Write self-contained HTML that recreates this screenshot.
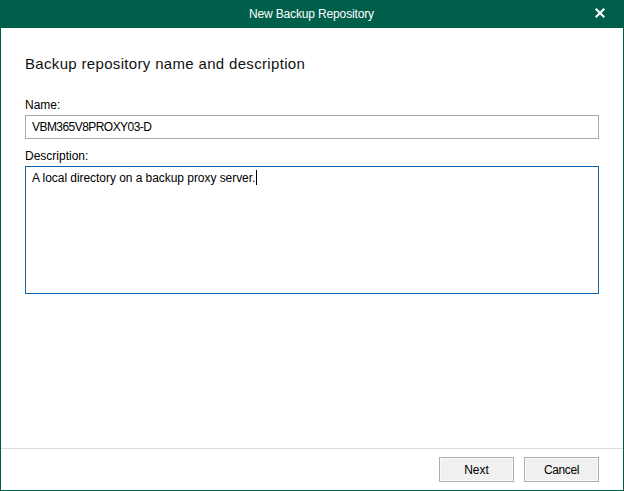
<!DOCTYPE html>
<html><head><meta charset="utf-8">
<style>
html,body{margin:0;padding:0;}
body{width:624px;height:491px;position:relative;overflow:hidden;background:#fff;font-family:"Liberation Sans",sans-serif;}
.abs{position:absolute;white-space:nowrap;}
#frame{position:absolute;left:0;top:0;width:622px;height:489px;border:1px solid #005F4B;background:#fff;}
#title{position:absolute;left:0;top:0;width:624px;height:28px;background:#005F4B;}
#ttext{left:249px;top:7px;font-size:12px;color:#fff;line-height:14px;letter-spacing:-0.15px;}
#close{left:594px;top:7px;width:12px;height:12px;}
#head{left:25px;top:55px;font-size:15px;color:#111;line-height:17px;letter-spacing:0.33px;}
.lbl{font-size:12px;color:#000;line-height:14px;}
#lname{left:25px;top:98px;}
#name{left:25px;top:115px;width:572px;height:22px;border:1px solid #A9A9A9;}
#nametext{left:32px;top:120px;letter-spacing:-0.55px;}
#ldesc{left:25px;top:149px;}
#desc{left:25px;top:166px;width:572px;height:126px;border:1px solid #0A64B0;}
#desctext{left:32px;top:171px;letter-spacing:-0.05px;}
#caret{left:256px;top:170px;width:1px;height:15px;background:#000;}
#sep{left:1px;top:448px;width:622px;height:1px;background:#DCDCDC;}
.btn{position:absolute;top:457px;width:73px;height:23px;border:1px solid #ADADAD;background:#F0F0F0;box-shadow:inset 0 0 0 1px #FAFAFA;font-size:12px;line-height:25px;text-align:center;color:#000;}
#next{left:439px;}
#cancel{left:524px;letter-spacing:-0.4px;}
</style></head>
<body>
<div id="frame"></div>
<div id="title"></div>
<div class="abs" id="ttext">New Backup Repository</div>
<svg class="abs" id="close" viewBox="0 0 12 12"><path d="M1.7 1.7L10.3 10.3M10.3 1.7L1.7 10.3" stroke="#fff" stroke-width="2"/></svg>
<div class="abs" id="head">Backup repository name and description</div>
<div class="abs lbl" id="lname">Name:</div>
<div class="abs" id="name"></div>
<div class="abs lbl" id="nametext">VBM365V8PROXY03-D</div>
<div class="abs lbl" id="ldesc">Description:</div>
<div class="abs" id="desc"></div>
<div class="abs lbl" id="desctext">A local directory on a backup proxy server.</div>
<div class="abs" id="caret"></div>
<div class="abs" id="sep"></div>
<div class="btn" id="next">Next</div>
<div class="btn" id="cancel">Cancel</div>
</body></html>
